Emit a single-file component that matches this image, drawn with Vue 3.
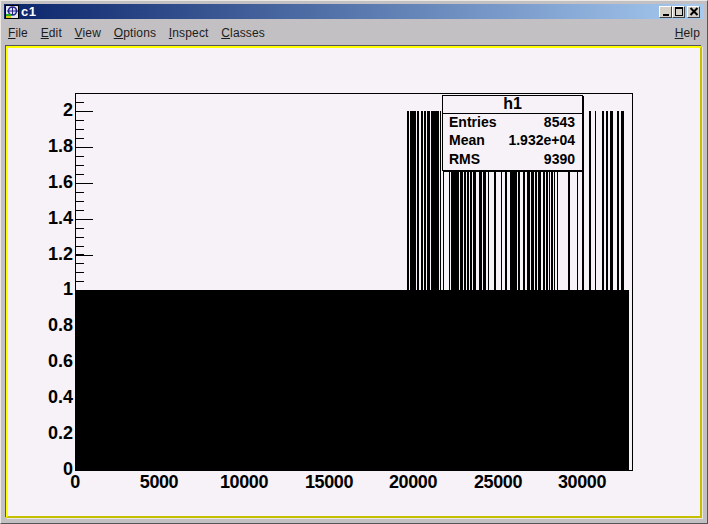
<script setup>
const menus = [
  { key: 'F', rest: 'ile' },
  { key: 'E', rest: 'dit' },
  { key: 'V', rest: 'iew' },
  { key: 'O', rest: 'ptions' },
  { key: 'I', rest: 'nspect' },
  { key: 'C', rest: 'lasses' }
]
const runs = [[407,2],[410,6],[417,2],[421,2],[424,2],[427,3],[431,8],[440,1],[443,1],[449,1],[451,8],[460,3],[464,2],[467,2],[470,2],[473,3],[479,3],[483,3],[488,1],[494,2],[501,1],[505,2],[510,7],[518,2],[523,2],[527,3],[531,3],[535,2],[538,3],[543,2],[546,2],[549,1],[551,2],[554,1],[557,1],[568,2],[577,1],[582,2],[589,2],[595,1],[602,2],[606,2],[610,3],[617,2],[621,3]]
const yLabels = [['2',111],['1.8',147],['1.6',183],['1.4',219],['1.2',255],['1',290],['0.8',326],['0.6',362],['0.4',398],['0.2',434],['0',470]]
const xLabels = [['0',75],['5000',159],['10000',244],['15000',329],['20000',413],['25000',498],['30000',582]]
const yMajor = [111,147,183,219,255,290,326,362,398,434]
const yMinor = []
for (let i = 0; i < 38; i++) {
  yMinor.push(Math.round(102 + i * 8.97))
}
</script>

<template>
  <div class="window">
    <div class="titlebar">
      <svg class="appicon" width="14" height="14" viewBox="0 0 14 14">
        <rect x="0.5" y="0.5" width="13" height="13" fill="#dfe6f0" stroke="#000" stroke-width="1"/>
        <circle cx="7.5" cy="6" r="4" fill="none" stroke="#22228a" stroke-width="1.6"/>
        <path d="M2 6h11M7.5 2v8" stroke="#22228a" stroke-width="1"/>
        <rect x="1" y="9" width="5" height="2" fill="#22aa22"/>
        <rect x="1" y="11" width="5" height="2" fill="#d8c818"/>
      </svg>
      <span class="title">c1</span>
      <div class="controls">
        <button class="ctl"><svg width="10" height="10" viewBox="0 0 10 10"><rect x="2" y="7" width="6" height="2" fill="#000"/></svg></button>
        <button class="ctl"><svg width="10" height="10" viewBox="0 0 10 10"><path d="M1 0h8v9H1zM2 2v6h6V2z" fill="#000" fill-rule="evenodd"/></svg></button>
        <button class="ctl close"><svg width="10" height="10" viewBox="0 0 10 10"><path d="M1.5 1l7 7M8.5 1l-7 7" stroke="#000" stroke-width="2"/></svg></button>
      </div>
    </div>
    <div class="menubar">
      <span v-for="m in menus" :key="m.key" class="menu"><u>{{ m.key }}</u>{{ m.rest }}</span>
      <span class="menu help"><u>H</u>elp</span>
    </div>
    <div class="canvas">
      <svg class="plot" width="692" height="468" viewBox="8 48 692 468" shape-rendering="crispEdges">
        <rect x="75.5" y="93.5" width="557" height="377" fill="none" stroke="#000"/>
        <rect x="75" y="290" width="554" height="181" fill="#000"/>
        <rect v-for="r in runs" :key="r[0]" :x="r[0]" y="111" :width="r[1]" height="180" fill="#000"/>
        <line v-for="y in yMinor" :key="'m' + y" x1="76" x2="84" :y1="y + 0.5" :y2="y + 0.5" stroke="#000"/>
        <line v-for="y in yMajor" :key="'M' + y" x1="76" x2="93" :y1="y + 0.5" :y2="y + 0.5" stroke="#000"/>
        <g class="ylab">
          <text v-for="l in yLabels" :key="l[0]" x="73" :y="l[1] + 5" text-anchor="end">{{ l[0] }}</text>
        </g>
        <g class="xlab">
          <text v-for="l in xLabels" :key="l[0]" :x="l[1]" y="488" text-anchor="middle">{{ l[0] }}</text>
        </g>
        <rect x="442.5" y="95.5" width="140" height="75" fill="#f6f2f7" stroke="#000"/>
        <line x1="443" x2="582" y1="113.5" y2="113.5" stroke="#000"/>
        <line x1="583.5" x2="583.5" y1="96" y2="172" stroke="#000"/>
        <line x1="443" x2="584" y1="171.5" y2="171.5" stroke="#000"/>
        <g class="stats">
          <text class="head" x="512.5" y="109" text-anchor="middle">h1</text>
          <text x="449" y="127">Entries</text>
          <text x="575" y="127" text-anchor="end">8543</text>
          <text x="449" y="145">Mean</text>
          <text x="575" y="145" text-anchor="end">1.932e+04</text>
          <text x="449" y="164">RMS</text>
          <text x="575" y="164" text-anchor="end">9390</text>
        </g>
      </svg>
    </div>
  </div>
</template>

<style>
html, body { margin: 0; background: #c3c0c3; }
</style>

<style scoped>
.window {
  width: 708px;
  height: 524px;
  box-sizing: border-box;
  padding: 3px 3px 5px 3px;
  background: #c3c0c3;
  border: 1px solid;
  border-color: #ece9e4 #555 #555 #ece9e4;
  display: flex;
  flex-direction: column;
  font-family: "Liberation Sans", Arial, sans-serif;
}
.titlebar {
  height: 15px;
  flex: none;
  display: flex;
  align-items: center;
  padding-left: 1px;
  background: linear-gradient(90deg, #0a246a, #a6caf0);
}
.appicon { flex: none; }
.title {
  margin-left: 2px;
  color: #fff;
  font-weight: bold;
  font-size: 13px;
  letter-spacing: 0.5px;
}
.controls { margin-left: auto; display: flex; margin-right: 4px; }
.ctl {
  width: 13px;
  height: 12px;
  padding: 0;
  background: #d4d0c8;
  border: 1px solid;
  border-color: #fff #404040 #404040 #fff;
  display: flex;
  align-items: center;
  justify-content: center;
}
.close { margin-left: 2px; }
.menubar {
  height: 25px;
  flex: none;
  box-sizing: border-box;
  padding: 2px 4px 0 4px;
  display: flex;
  align-items: center;
  gap: 12.7px;
  font-size: 12px;
  color: #1c1c1c;
  letter-spacing: 0.15px;
}
.help { margin-left: auto; }
.canvas {
  flex: 1;
  min-height: 0;
  margin: 2px 2px 0 2px;
  box-sizing: border-box;
  border: 2px solid;
  border-color: #ffff00 #c4c000 #c4c000 #ffff00;
  box-shadow: -1px -1px 0 #555, 1px 1px 0 #ece9e4;
  background: #f6f2f7;
}
.plot { display: block; }
.ylab text, .xlab text {
  font-size: 18px;
  font-weight: bold;
  fill: #000;
  font-family: "Liberation Sans", Arial, sans-serif;
}
.xlab text { letter-spacing: -0.4px; }
.stats text {
  font-size: 14px;
  font-weight: bold;
  fill: #000;
  font-family: "Liberation Sans", Arial, sans-serif;
}
.stats .head { font-size: 16px; }
</style>
